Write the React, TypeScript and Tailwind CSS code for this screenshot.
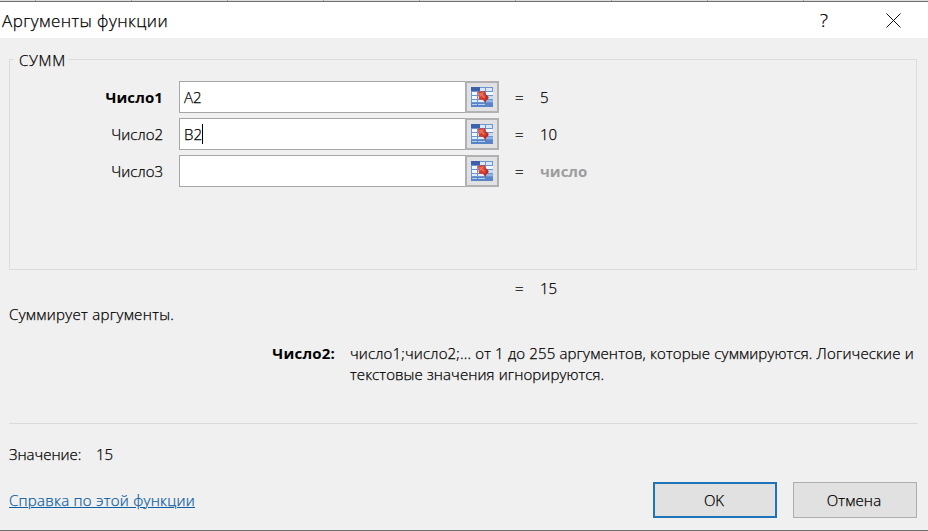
import React from "react";

function PickerIcon() {
  return (
    <svg width="22" height="20" viewBox="0 0 22 20">
      <rect width="22" height="20" fill="#6c95d2" />
      <rect width="9" height="4" fill="#3c61a8" />
      <path d="M9 1H14V4H9ZM15 1H21V4H15Z" fill="#dbe8f8" />
      <path d="M1 5H6V8H1ZM7 5H14V8H7ZM15 5H22V8H15Z" fill="#f1f7fd" />
      <path d="M1 9H6V12H1ZM7 9H14V12H7Z" fill="#f4f9fe" />
      <path d="M15 9H22V12H15Z" fill="#c6dbf4" />
      <path d="M1 13H6V15H1ZM7 13H14V15H7Z" fill="#e2edfa" />
      <path d="M15 13H22V15H15Z" fill="#8fb3e4" />
      <rect y="16" width="22" height="4" fill="#5985c8" />
      <path d="M1 17H6V18H1ZM7 17H14V18H7Z" fill="#b7cfee" />
      <path d="M7 4.500L14 4L14.500 7L17.500 10L17 12L15 13.500L14.500 16L12 13L8 12.500Z" fill="#cf3d2e" />
      <path d="M8 6L13 5L12 7.500L14 10L13 11L10 9L8.500 10.500Z" fill="#ea6b56" />
      <path d="M14.500 7L17.500 10L17 12L15 13.500L14.500 16L13 13L15.500 11Z" fill="#b32d25" />
    </svg>
  );
}

type ArgRow = { label: string; bold?: boolean; value: string; caret?: boolean; result: string; muted?: boolean };

const ROWS: ArgRow[] = [
  { label: "Число1", bold: true, value: "A2", result: "5" },
  { label: "Число2", value: "B2", caret: true, result: "10" },
  { label: "Число3", value: "", result: "число", muted: true },
];

const SHEET_COLUMNS = Array.from({ length: 9 }, (_, i) => i);

function ArgumentRow({ label, bold, value, caret, result, muted }: ArgRow) {
  return (
    <div className="flex h-8 items-center">
      <div className={`w-[153px] text-right ${bold ? "font-bold tracking-[0.1px] [-webkit-text-stroke:0]" : ""}`}>{label}</div>
      <div className="ml-4 flex h-8 w-80 border border-[#a6a6a6] bg-white">
        <div className="flex flex-1 items-center pl-1">
          <span>{value}</span>
          {caret && <span className="h-5 w-px bg-black" />}
        </div>
        <div className="-my-px -mr-px flex w-[34px] items-center justify-center border-2 border-[#b1b1b3] bg-[#e1e1e3]">
          <PickerIcon />
        </div>
      </div>
      <span className="ml-4 w-[25px]">=</span>
      <span className={muted ? "font-bold text-[#9d9d9d] [-webkit-text-stroke:0]" : ""}>{result}</span>
    </div>
  );
}

export default function App() {
  return (
    <div className="flex h-[531px] w-[928px] flex-col overflow-hidden border-b border-[#707070] bg-[#f0f0f0] font-['Open_Sans','Noto_Sans',sans-serif] text-[15px] font-light leading-[21px] text-black [-webkit-text-stroke:0.25px]">
      <div className="flex h-0.5 shrink-0 border-b border-[#707070] bg-[#dcdcdc] pl-[35px]">
        {SHEET_COLUMNS.map((c) => (
          <div key={c} className="w-24 shrink-0 border-l border-[#a0a0a0]" />
        ))}
      </div>
      <header className="flex h-9 shrink-0 items-center bg-white pl-[2px]">
        <h1 className="flex-1 text-[17px] font-light tracking-[0.43px]">Аргументы функции</h1>
        <span className="mr-[58px] text-[19px]">?</span>
        <svg className="mr-[27px]" width="15" height="15" viewBox="0 0 15 15" stroke="#111" strokeWidth="1">
          <path d="M.5.5L14.5 14.5M14.5.5L.5 14.5" />
        </svg>
      </header>
      <main className="flex flex-1 flex-col pl-[9px] pr-[10px]">
        <section className="mr-px mt-[21px] h-[211px] border border-[#dcdcdc]">
          <h2 className="-mt-[10px] ml-1 w-fit bg-[#f0f0f0] pl-[5px] pr-0.5 font-light tracking-[0.7px]">СУММ</h2>
          <div className="mt-[10px] flex flex-col gap-[5px]">
            {ROWS.map((row) => (
              <ArgumentRow key={row.label} {...row} />
            ))}
          </div>
        </section>
        <div className="ml-[506px] mt-2 flex">
          <span className="w-[25px]">=</span>
          <span>15</span>
        </div>
        <p className="mt-[5px] tracking-[0.32px]">Суммирует аргументы.</p>
        <div className="mt-[18px] flex">
          <b className="w-[326px] shrink-0 text-right font-bold tracking-[0.2px] [-webkit-text-stroke:0]">Число2:</b>
          <p className="ml-[15px] whitespace-nowrap">
            <span className="tracking-[0.155px]">число1;число2;... от 1 до 255 аргументов, которые суммируются. Логические и</span>
            <br />
            <span className="tracking-[0.1px]">текстовые значения игнорируются.</span>
          </p>
        </div>
        <hr className="mt-[38px] border-[#dadada]" />
        <div className="mt-5 flex">
          <span className="w-[87px]">Значение:</span>
          <span>15</span>
        </div>
        <footer className="mt-[17px] flex h-9 items-center">
          <a className="flex-1 tracking-[0.27px] text-[#0f5fa3] underline">Справка по этой функции</a>
          <button className="h-9 w-[124px] border-2 border-[#1f74b8] bg-[#e1e1e1] pr-0.5">OK</button>
          <button className="ml-4 mr-px h-9 w-[124px] border border-[#adadad] bg-[#e1e1e1] pr-0.5 tracking-[0.15px]">Отмена</button>
        </footer>
      </main>
    </div>
  );
}
